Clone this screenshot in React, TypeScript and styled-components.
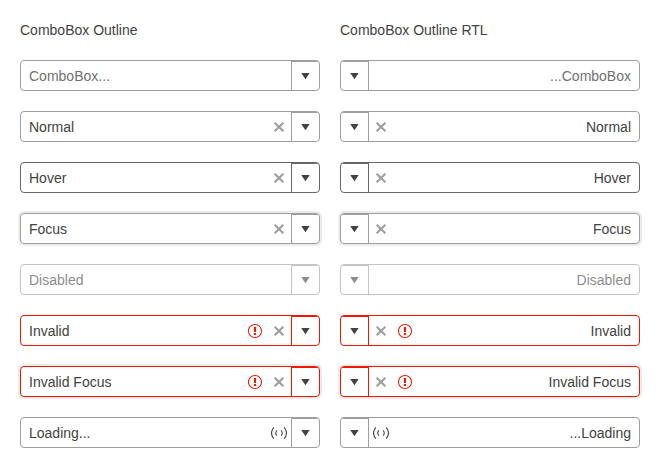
import React from 'react';
import styled, { createGlobalStyle } from 'styled-components';

const GlobalStyle = createGlobalStyle`
  * { box-sizing: border-box; }
  body {
    margin: 0;
    background: #fff;
    color: #424242;
    font: 14px/20px "Liberation Sans", Arial, sans-serif;
  }
`;

const Page = styled.main`
  display: grid;
  grid-template-columns: 300px 300px;
  column-gap: 20px;
  padding: 20px;
`;

const Column = styled.section`
  display: flex;
  flex-direction: column;
  gap: 20px;
`;

const Title = styled.h2`
  margin: 0;
  font-size: 14px;
  font-weight: 400;
  line-height: 20px;
`;

const Combo = styled.div<{ $border: string; $shadow?: boolean; $disabled?: boolean }>`
  display: flex;
  height: 31px;
  border: 1px solid ${(p) => p.$border};
  border-radius: 4px;
  overflow: hidden;
  opacity: ${(p) => (p.$disabled ? 0.6 : 1)};
  box-shadow: ${(p) => (p.$shadow ? '0 0 0 2px rgba(0, 0, 0, 0.08)' : 'none')};
`;

const Value = styled.span<{ $muted?: boolean }>`
  flex: 1;
  padding: 5px 8px 4px;
  color: ${(p) => (p.$muted ? '#717171' : '#424242')};
`;

const Indicators = styled.span`
  display: flex;
  align-items: flex-start;
  gap: 8px;
  padding-top: 7px;
  padding-inline-end: 4px;
`;

const DropButton = styled.span<{ $border: string }>`
  display: flex;
  align-items: flex-start;
  width: 28px;
  border-top: 1px solid ${(p) => p.$border};
  border-inline-start: 1px solid ${(p) => p.$border};
  padding: 6px 0 0 5px;
  direction: ltr;

  [dir='rtl'] > & {
    border-left: 0;
    border-right: 1px solid ${(p) => p.$border};
  }
`;

const Icon = styled.svg<{ $color?: string }>`
  display: block;
  width: 16px;
  height: 16px;
  flex: none;
  fill: ${(p) => p.$color ?? '#424242'};
`;

const Caret = () => (
  <Icon viewBox="0 0 16 16">
    <path d="M8.45 11.2 4.25 5h8.4z" />
  </Icon>
);

const Clear = () => (
  <Icon viewBox="0 0 16 16" $color="#9e9e9e">
    <path d="M13.1 4.4 9.5 8l3.6 3.6-1.5 1.5L8 9.5l-3.6 3.6-1.5-1.5L6.5 8 2.9 4.4l1.5-1.5L8 6.5l3.6-3.6z" />
  </Icon>
);

const Warning = () => (
  <Icon viewBox="0 0 512 512" $color="#f31700">
    <path d="M256 32C132.3 32 32 132.3 32 256s100.3 224 224 224 224-100.3 224-224S379.7 32 256 32m0 416c-106 0-192-86-192-192S150 64 256 64s192 86 192 192-86 192-192 192m34-64h-68v-64h68zm0-96h-68V128h68z" />
  </Icon>
);

const StrokeIcon = styled(Icon)`
  fill: none;
  stroke: #424242;
  stroke-width: 1.1;
`;

const Loading = () => (
  <StrokeIcon viewBox="0 0 16 16">
    <path d="M2.9 2.4C-.3 5.6-.3 10.4 2.9 13.6M13.1 2.4c3.2 3.2 3.2 8 0 11.2M6 5.3c-1.7 1.5-1.7 3.9 0 5.4M10 5.3c1.7 1.5 1.7 3.9 0 5.4" />
  </StrokeIcon>
);

type Item = {
  label: string;
  border: string;
  muted?: boolean;
  shadow?: boolean;
  disabled?: boolean;
  icons: React.ComponentType[];
};

const GRAY = '#9e9e9e';
const RED = '#f31700';

const items: Item[] = [
  { label: 'ComboBox...', border: GRAY, muted: true, icons: [] },
  { label: 'Normal', border: GRAY, icons: [Clear] },
  { label: 'Hover', border: '#666666', icons: [Clear] },
  { label: 'Focus', border: GRAY, shadow: true, icons: [Clear] },
  { label: 'Disabled', border: GRAY, disabled: true, icons: [] },
  { label: 'Invalid', border: RED, icons: [Warning, Clear] },
  { label: 'Invalid Focus', border: RED, shadow: true, icons: [Warning, Clear] },
  { label: 'Loading...', border: GRAY, icons: [Loading] },
];

const ComboColumn = ({ title, dir }: { title: string; dir: 'ltr' | 'rtl' }) => (
  <Column>
    <Title>{title}</Title>
    {items.map((item) => (
      <Combo
        key={item.label}
        dir={dir}
        $border={item.border}
        $shadow={item.shadow}
        $disabled={item.disabled}
      >
        <Value $muted={item.muted}>{item.label}</Value>
        <Indicators>
          {item.icons.map((Glyph, i) => (
            <Glyph key={i} />
          ))}
        </Indicators>
        <DropButton $border={item.border}>
          <Caret />
        </DropButton>
      </Combo>
    ))}
  </Column>
);

export default function App() {
  return (
    <>
      <GlobalStyle />
      <Page>
        <ComboColumn title="ComboBox Outline" dir="ltr" />
        <ComboColumn title="ComboBox Outline RTL" dir="rtl" />
      </Page>
    </>
  );
}
